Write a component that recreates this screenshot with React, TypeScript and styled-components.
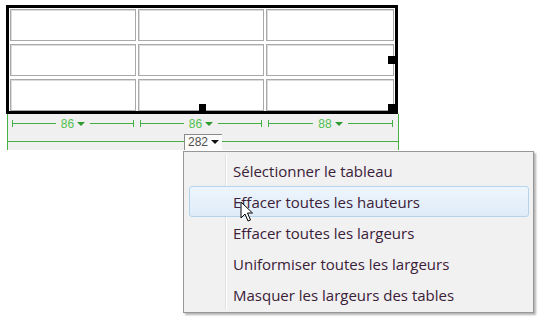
import React from 'react';
import styled, { createGlobalStyle } from 'styled-components';

const GlobalStyle = createGlobalStyle`
  html, body {
    margin: 0;
    padding: 0;
    background: #ffffff;
  }
`;

const GREEN = '#45b145';

const Page = styled.div`
  position: relative;
  width: 539px;
  height: 321px;
  padding: 5px 0 0 6px;
  box-sizing: border-box;
  overflow: hidden;
  font-family: 'Liberation Sans', Arial, sans-serif;
`;

const TableFrame = styled.div`
  position: relative;
  width: max-content;
  border: 3px solid #000;
  padding: 1px 1px 0 1px;
`;

const Grid = styled.div`
  display: grid;
  grid-template-columns: 126px 126px 128px;
  grid-auto-rows: 32px;
  column-gap: 2px;
  row-gap: 3px;
`;

const Cell = styled.div`
  background: #fff;
  border: 1px solid #a9a9a9;
  box-shadow: inset 1px 1px 0 #dcdcdc;
`;

const Handle = styled.div<{ $x: number; $y: number; $w: number; $h: number }>`
  position: absolute;
  left: ${(p) => p.$x}px;
  top: ${(p) => p.$y}px;
  width: ${(p) => p.$w}px;
  height: ${(p) => p.$h}px;
  background: #000;
`;

const Ruler = styled.div`
  width: 390px;
  margin-left: 1px;
  height: 36px;
  background: #f0f0f0;
  border-left: 1px solid ${GREEN};
  border-right: 1px solid ${GREEN};
  display: flex;
  flex-direction: column;
`;

const ColumnRow = styled.div`
  display: flex;
  height: 19px;
  align-items: center;
  padding-left: 4px;
  gap: 6px;
`;

const Segment = styled.div<{ $w: number }>`
  width: ${(p) => p.$w}px;
  display: flex;
  align-items: center;
`;

const Tick = styled.span`
  width: 1px;
  height: 7px;
  background: ${GREEN};
`;

const Line = styled.span`
  flex: 1;
  height: 1px;
  background: ${GREEN};
`;

const Label = styled.span`
  display: flex;
  align-items: center;
  gap: 3px;
  padding: 0 5px;
  font-size: 12px;
  line-height: 12px;
  color: #4fc04f;
`;

const Caret = styled.span<{ $color: string }>`
  width: 0;
  height: 0;
  border-left: 4px solid transparent;
  border-right: 4px solid transparent;
  border-top: 4px solid ${(p) => p.$color};
`;

const TotalRow = styled.div`
  display: flex;
  align-items: center;
  height: 17px;
`;

const TotalBox = styled.span`
  display: flex;
  align-items: center;
  gap: 3px;
  height: 16px;
  padding: 0 3px 0 3px;
  background: #fbfbfb;
  border-left: 1px solid #8a8a8a;
  border-top: 1px solid #8a8a8a;
  box-sizing: border-box;
  font-size: 12px;
  color: #505050;
`;

const Menu = styled.div`
  position: absolute;
  left: 183px;
  top: 151px;
  width: 351px;
  height: 162px;
  box-sizing: border-box;
  padding: 3px 4px 3px 5px;
  background: #f1f1f1;
  border: 1px solid #979797;
  box-shadow: 2px 2px 2px rgba(0, 0, 0, 0.3);
  font-family: 'Open Sans', 'Noto Sans', sans-serif;
  &::before {
    content: '';
    position: absolute;
    left: 41px;
    top: 2px;
    bottom: 2px;
    width: 1px;
    background: #e0e0e0;
    box-shadow: 1px 0 0 #fff;
  }
`;

const MenuItem = styled.div<{ $active?: boolean }>`
  position: relative;
  height: 31px;
  box-sizing: border-box;
  display: flex;
  align-items: center;
  padding-left: 43px;
  font-size: 15px;
  color: #3a2038;
  border-radius: 3px;
  border: 1px solid ${(p) => (p.$active ? '#b2d4ee' : 'transparent')};
  background: ${(p) =>
    p.$active ? 'linear-gradient(#eef5fc, #dfecf8)' : 'transparent'};
`;

const Cursor = styled.svg`
  position: absolute;
  left: 240px;
  top: 201px;
`;

const columns = [
  { w: 122, label: '86' },
  { w: 122, label: '86' },
  { w: 125, label: '88' },
];

const items = [
  'Sélectionner le tableau',
  'Effacer toutes les hauteurs',
  'Effacer toutes les largeurs',
  'Uniformiser toutes les largeurs',
  'Masquer les largeurs des tables',
];

const App: React.FC = () => {
  return (
    <Page>
      <GlobalStyle />
      <TableFrame>
        <Grid>
          {Array.from({ length: 9 }).map((_, i) => (
            <Cell key={i} />
          ))}
        </Grid>
        <Handle $x={190} $y={96} $w={7} $h={9} />
        <Handle $x={379} $y={48} $w={10} $h={8} />
        <Handle $x={379} $y={96} $w={10} $h={9} />
      </TableFrame>
      <Ruler>
        <ColumnRow>
          {columns.map((c, i) => (
            <Segment key={i} $w={c.w}>
              <Tick />
              <Line />
              <Label>
                {c.label}
                <Caret $color="#2f9a2f" />
              </Label>
              <Line />
              <Tick />
            </Segment>
          ))}
        </ColumnRow>
        <TotalRow>
          <Line />
          <TotalBox>
            282
            <Caret $color="#111" />
          </TotalBox>
          <Line />
        </TotalRow>
      </Ruler>
      <Menu>
        {items.map((t, i) => (
          <MenuItem key={t} $active={i === 1}>
            {t}
          </MenuItem>
        ))}
      </Menu>
      <Cursor width="14" height="22" viewBox="0 0 14 22">
        <path
          d="M1 1 L1 17 L5 13 L8 20 L10.5 19 L7.5 12 L12.5 12 Z"
          fill="#fff"
          stroke="#000"
          strokeWidth="1"
          strokeLinejoin="round"
        />
      </Cursor>
    </Page>
  );
};

export default App;
